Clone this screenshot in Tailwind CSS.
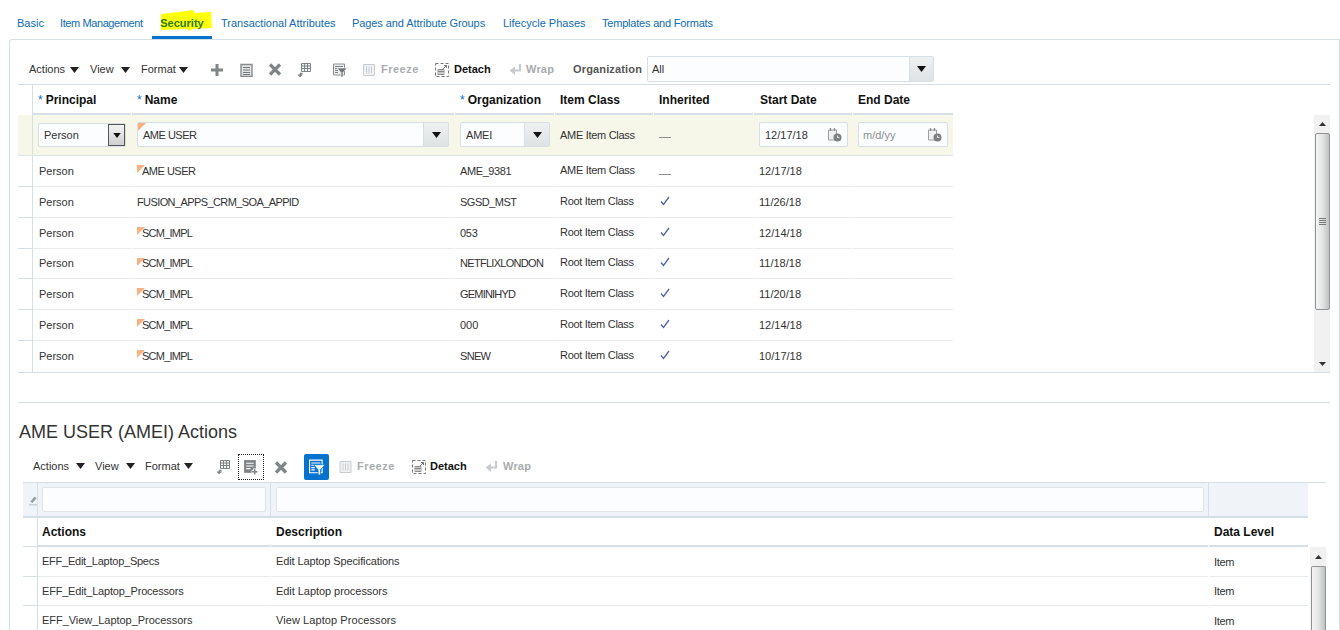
<!DOCTYPE html>
<html lang="en">
<head>
<meta charset="utf-8">
<script src="https://cdn.jsdelivr.net/npm/@tailwindcss/browser@4"></script>
<title>Security</title>
</head>
<body class="h-[630px] w-[1340px] overflow-hidden bg-white font-['Liberation_Sans',Arial,sans-serif] text-[11px] leading-none text-[#333]">

<!-- Tabs -->
<nav class="flex h-[39px] items-start text-[#0f6cb5]">
  <a class="ml-[17px] mt-[18px] w-[27px]">Basic</a>
  <a class="ml-[16px] mt-[18px] w-[83px] whitespace-nowrap tracking-[-0.4px]">Item Management</a>
  <a class="relative ml-[9px] flex h-[39px] w-[60px] justify-center border-b-[3px] border-[#0572ce]">
    <svg class="absolute left-[8px] top-[9px] h-[23px] w-[52px]" viewBox="0 0 52 23"><path d="M1 5C12 4 26 2 32 1l2 1 1 2 16-1 1 16-20 1-2 2-3-2L1 21z" fill="#ffff0a"/></svg>
    <span class="relative mt-[18px] font-bold text-[#2c7a10]">Security</span>
  </a>
  <a class="ml-[9px] mt-[18px] w-[115px] whitespace-nowrap">Transactional Attributes</a>
  <a class="ml-[16px] mt-[18px] w-[134px] whitespace-nowrap tracking-[-0.08px]">Pages and Attribute Groups</a>
  <a class="ml-[17px] mt-[18px] w-[83px] whitespace-nowrap">Lifecycle Phases</a>
  <a class="ml-[16px] mt-[18px] w-[111px] whitespace-nowrap tracking-[-0.2px]">Templates and Formats</a>
</nav>

<!-- Panel -->
<main class="ml-[9px] h-[591px] w-[1331px] rounded-tl-[3px] border-x border-t border-[#d6dfe6]">
  <div class="ml-[8px] w-[1312px] pt-[17px]">

    <!-- Toolbar 1 -->
    <div class="flex h-[28px] items-start border-b border-[#d6dfe6]">
      <div class="flex h-[25px] items-center whitespace-nowrap">
        <span class="ml-[11px] w-[37px]">Actions</span>
        <svg class="ml-[4px] h-[6px] w-[9px]" viewBox="0 0 9 6"><path d="M0 0h9L4.500 6z" fill="#222"/></svg>
        <span class="ml-[11px] w-[26px]">View</span>
        <svg class="ml-[5px] h-[6px] w-[9px]" viewBox="0 0 9 6"><path d="M0 0h9L4.500 6z" fill="#222"/></svg>
        <span class="ml-[11px] w-[34px]">Format</span>
        <svg class="ml-[4px] h-[6px] w-[9px]" viewBox="0 0 9 6"><path d="M0 0h9L4.500 6z" fill="#222"/></svg>
        <svg class="ml-[23px] h-[12px] w-[12px]" viewBox="0 0 12 12"><path d="M4.500 0h3v4.500H12v3H7.500V12h-3V7.500H0v-3h4.500z" fill="#808587"/></svg>
        <svg class="ml-[17px] h-[14px] w-[13px]" viewBox="0 0 13 14"><path d="M1 1.500h11v12H1z" fill="#e2e4e5" stroke="#888c8f" stroke-width="1.400"/><path d="M3 4.500h7M3 7h7M3 9.500h7M3 11.500h7" stroke="#74787b" stroke-width="1.200"/></svg>
        <svg class="ml-[15px] h-[13px] w-[14px]" viewBox="0 0 14 13"><path d="M2 1.500l10 10M12 1.500l-10 10" stroke="#808587" stroke-width="3.200"/></svg>
        <svg class="ml-[15px] h-[14px] w-[14px]" viewBox="0 0 14 14"><path d="M4.500.5h9v8h-9zM4.500 3h9M4.500 5.500h9M7.500.5v8M10.500.5v8" fill="#f4f5f5" stroke="#7f8386"/><path d="M5.500 10.500H3.500V12" fill="none" stroke="#7f8386" stroke-width="1.500"/><path d="M0.500 11.500h5.500L3 14.500z" fill="#7f8386"/></svg>
        <svg class="ml-[22px] h-[14px] w-[14px]" viewBox="0 0 14 14"><path d="M.5 1h11v11H.5z" fill="#eceded" stroke="#8a8e91"/><path d="M2 3.500h8M2 5.500h3M2 7.500h3M2 9.500h3" stroke="#7c8083"/><path d="M4 5h10l-4 4.500V14H8V9.500z" fill="#6f7376" stroke="#fff" stroke-width=".6"/></svg>
        <svg class="ml-[16px] h-[14px] w-[12px]" viewBox="0 0 12 14"><path d="M.5 1.500h11v11H.5z" fill="#f1f2f3" stroke="#c9cccf"/><path d="M3.500 3.500v7M6 3.500v7M8.500 3.500v7" stroke="#c9cccf"/></svg>
        <span class="ml-[6px] w-[38px] font-bold tracking-[0.5px] text-[#a9acae]">Freeze</span>
        <svg class="ml-[16px] h-[14px] w-[14px]" viewBox="0 0 14 14"><path d="M.5.5h13v13H.5z" fill="none" stroke="#777" stroke-dasharray="3 2"/><path d="M3 6.500h6v5H3zM3 8.500h6M5 6.500v5M7 6.500v5" fill="none" stroke="#777" stroke-width=".8"/><path d="M8 6l3.500-3.500M9 2.500h2.500V5" fill="none" stroke="#777"/></svg>
        <span class="ml-[5px] w-[37px] font-bold text-[#111]">Detach</span>
        <svg class="ml-[18px] h-[12px] w-[13px]" viewBox="0 0 13 12"><path d="M11 0v6.500H5" fill="none" stroke="#c9cccf" stroke-width="2.200"/><path d="M6 2.500L.5 6.500 6 11z" fill="#c9cccf"/></svg>
        <span class="ml-[4px] w-[28px] font-bold tracking-[0.2px] text-[#a9acae]">Wrap</span>
        <span class="ml-[19px] w-[69px] font-bold tracking-[0.15px] text-[#555]">Organization</span>
      </div>
      <div class="-mt-[1px] ml-[5px] flex h-[26px] w-[287px] rounded-[2px] border border-[#d6dfe6] bg-[#fcfdfe]">
        <span class="flex-1 pl-[4px] pt-[7px]">All</span>
        <span class="flex w-[24px] items-center justify-center border-l border-[#d6dfe6] bg-linear-to-b from-[#eef0f1] to-[#dfe3e5]"><svg class="h-[6px] w-[9px]" viewBox="0 0 9 6"><path d="M0 0h9L4.500 6z" fill="#111"/></svg></span>
      </div>
    </div>

    <!-- Table 1 -->
    <div class="border-b border-[#d6dfe6]">
      <!-- Header -->
      <div class="flex h-[30px] text-[12px] font-bold text-[#111]">
        <div class="w-[15px] border-r border-[#d6dfe6]"></div>
        <div class="mr-px flex w-[98px] items-center whitespace-nowrap border-b-2 border-[#d6dfe6] pl-[5px] pt-[2px]"><span class="mr-[3px] font-normal text-[#0572ce]">*</span>Principal</div>
        <div class="mr-px flex w-[322px] items-center whitespace-nowrap border-b-2 border-[#d6dfe6] pl-[5px] pt-[2px]"><span class="mr-[3px] font-normal text-[#0572ce]">*</span>Name</div>
        <div class="mr-px flex w-[99px] items-center whitespace-nowrap border-b-2 border-[#d6dfe6] pl-[5px] pt-[2px]"><span class="mr-[3px] font-normal text-[#0572ce]">*</span>Organization</div>
        <div class="mr-px flex w-[98px] items-center whitespace-nowrap border-b-2 border-[#d6dfe6] pl-[5px] pt-[2px]">Item Class</div>
        <div class="mr-px flex w-[99px] items-center whitespace-nowrap border-b-2 border-[#d6dfe6] pl-[5px] pt-[2px]">Inherited</div>
        <div class="mr-px flex w-[98px] items-center whitespace-nowrap border-b-2 border-[#d6dfe6] pl-[6px] pt-[2px]">Start Date</div>
        <div class="flex w-[100px] items-center whitespace-nowrap border-b-2 border-[#d6dfe6] pl-[5px] pt-[2px]">End Date</div>
      </div>

      <div class="flex">
        <div class="w-[1296px]">
          <!-- Edit row -->
          <div class="flex h-[41px] w-[935px] border-b border-[#dfe4e8] bg-[#f6f7e9]">
            <div class="w-[15px] border-r border-[#d6dfe6]"></div>
            <div class="w-[99px] pl-[5px] pt-[8px]">
              <div class="flex h-[24px] w-[88px] rounded-[2px] border border-[#d6dfe6] bg-[#fcfdfe]">
                <span class="flex-1 pl-[5px] pt-[6px]">Person</span>
                <span class="flex w-[17px] items-center justify-center border border-[#555] bg-linear-to-b from-[#f4f4f4] to-[#cfcfcf]"><svg class="h-[5px] w-[8px]" viewBox="0 0 9 6"><path d="M0 0h9L4.500 6z" fill="#111"/></svg></span>
              </div>
            </div>
            <div class="w-[323px] pl-[5px] pt-[7px]">
              <div class="relative flex h-[25px] w-[312px] rounded-[2px] border border-[#d6dfe6] bg-[#fcfdfe]">
                <svg class="absolute left-0 top-0 h-[8px] w-[8px]" viewBox="0 0 8 8"><path d="M0 0h8L0 8z" fill="#f8b183"/></svg>
                <span class="flex-1 pl-[5px] pt-[7px] tracking-[-0.5px]">AME USER</span>
                <span class="flex w-[25px] items-center justify-center border-l border-[#d6dfe6] bg-linear-to-b from-[#eef0f1] to-[#dfe3e5]"><svg class="h-[6px] w-[9px]" viewBox="0 0 9 6"><path d="M0 0h9L4.500 6z" fill="#111"/></svg></span>
              </div>
            </div>
            <div class="w-[100px] pl-[5px] pt-[7px]">
              <div class="flex h-[25px] w-[90px] rounded-[2px] border border-[#d6dfe6] bg-[#fcfdfe]">
                <span class="flex-1 pl-[5px] pt-[7px] tracking-[-0.2px]">AMEI</span>
                <span class="flex w-[25px] items-center justify-center border-l border-[#d6dfe6] bg-linear-to-b from-[#eef0f1] to-[#dfe3e5]"><svg class="h-[6px] w-[9px]" viewBox="0 0 9 6"><path d="M0 0h9L4.500 6z" fill="#111"/></svg></span>
              </div>
            </div>
            <div class="flex w-[99px] items-center pl-[5px] tracking-[-0.3px]">AME Item Class</div>
            <div class="flex w-[100px] items-center pl-[5px]"><span class="mt-[5px] h-px w-[12px] bg-[#8a8e91]"></span></div>
            <div class="w-[99px] pl-[5px] pt-[7px]">
              <div class="flex h-[25px] w-[89px] items-center justify-between rounded-[2px] border border-[#d6dfe6] bg-[#fcfdfe] pl-[5px] pr-[5px]">
                <span class="mt-[2px]">12/17/18</span>
                <svg class="h-[15px] w-[15px]" viewBox="0 0 15 15"><path d="M1.500 3h8v10h-8z" fill="#eef0f1" stroke="#9aa0a3"/><path d="M3.500 1v3M7.500 1v3" stroke="#8a8e91" stroke-width="1.300"/><circle cx="10.500" cy="10.500" r="4" fill="#7c8083"/><path d="M10.500 8.500v2h2" fill="none" stroke="#fff" stroke-width=".8"/></svg>
              </div>
            </div>
            <div class="w-[100px] pl-[5px] pt-[7px]">
              <div class="flex h-[25px] w-[90px] items-center justify-between rounded-[2px] border border-[#d6dfe6] bg-[#fcfdfe] pl-[4px] pr-[5px]">
                <span class="mt-[2px] text-[#8a8e91]">m/d/yy</span>
                <svg class="h-[15px] w-[15px]" viewBox="0 0 15 15"><path d="M1.500 3h8v10h-8z" fill="#eef0f1" stroke="#9aa0a3"/><path d="M3.500 1v3M7.500 1v3" stroke="#8a8e91" stroke-width="1.300"/><circle cx="10.500" cy="10.500" r="4" fill="#7c8083"/><path d="M10.500 8.500v2h2" fill="none" stroke="#fff" stroke-width=".8"/></svg>
              </div>
            </div>
          </div>

          <!-- Rows -->
          <div class="flex h-[31px]">
            <div class="w-[15px] border-b border-r border-[#d6dfe6]"></div>
            <div class="mr-px flex w-[98px] items-center border-b border-[#e8ebee] pl-[6px]">Person</div>
            <div class="relative mr-px flex w-[322px] items-center border-b border-[#e8ebee] pl-[10px]"><svg class="absolute left-[5px] top-[9px] h-[8px] w-[8px]" viewBox="0 0 8 8"><path d="M0 0h8L0 8z" fill="#f8b183"/></svg><span class="relative tracking-[-0.5px]">AME USER</span></div>
            <div class="mr-px flex w-[99px] items-center border-b border-[#e8ebee] pl-[5px] tracking-[-0.4px]">AME_9381</div>
            <div class="mr-px flex w-[98px] items-center border-b border-[#e8ebee] pb-[2px] pl-[5px] tracking-[-0.3px]">AME Item Class</div>
            <div class="mr-px flex w-[99px] items-center border-b border-[#e8ebee] pl-[5px]"><span class="mt-[6px] h-px w-[12px] bg-[#8a8e91]"></span></div>
            <div class="mr-px flex w-[98px] items-center border-b border-[#e8ebee] pl-[5px]">12/17/18</div>
            <div class="w-[100px] border-b border-[#e8ebee]"></div>
          </div>
          <div class="flex h-[31px]">
            <div class="w-[15px] border-b border-r border-[#d6dfe6]"></div>
            <div class="mr-px flex w-[98px] items-center border-b border-[#e8ebee] pl-[6px]">Person</div>
            <div class="mr-px flex w-[322px] items-center border-b border-[#e8ebee] pl-[5px] tracking-[-0.6px]">FUSION_APPS_CRM_SOA_APPID</div>
            <div class="mr-px flex w-[99px] items-center border-b border-[#e8ebee] pl-[5px] tracking-[-0.5px]">SGSD_MST</div>
            <div class="mr-px flex w-[98px] items-center border-b border-[#e8ebee] pb-[2px] pl-[5px] tracking-[-0.3px]">Root Item Class</div>
            <div class="mr-px flex w-[99px] items-center border-b border-[#e8ebee] pb-[3px] pl-[6px]"><svg class="h-[10px] w-[10px]" viewBox="0 0 10 10"><path d="M1 5.500L3.500 8.500 9 1" fill="none" stroke="#5560a0" stroke-width="1.300"/></svg></div>
            <div class="mr-px flex w-[98px] items-center border-b border-[#e8ebee] pl-[5px]">11/26/18</div>
            <div class="w-[100px] border-b border-[#e8ebee]"></div>
          </div>
          <div class="flex h-[31px]">
            <div class="w-[15px] border-b border-r border-[#d6dfe6]"></div>
            <div class="mr-px flex w-[98px] items-center border-b border-[#e8ebee] pl-[6px]">Person</div>
            <div class="relative mr-px flex w-[322px] items-center border-b border-[#e8ebee] pl-[10px]"><svg class="absolute left-[5px] top-[9px] h-[8px] w-[8px]" viewBox="0 0 8 8"><path d="M0 0h8L0 8z" fill="#f8b183"/></svg><span class="relative tracking-[-0.75px]">SCM_IMPL</span></div>
            <div class="mr-px flex w-[99px] items-center border-b border-[#e8ebee] pl-[5px] tracking-[-0.3px]">053</div>
            <div class="mr-px flex w-[98px] items-center border-b border-[#e8ebee] pb-[2px] pl-[5px] tracking-[-0.3px]">Root Item Class</div>
            <div class="mr-px flex w-[99px] items-center border-b border-[#e8ebee] pb-[3px] pl-[6px]"><svg class="h-[10px] w-[10px]" viewBox="0 0 10 10"><path d="M1 5.500L3.500 8.500 9 1" fill="none" stroke="#5560a0" stroke-width="1.300"/></svg></div>
            <div class="mr-px flex w-[98px] items-center border-b border-[#e8ebee] pl-[5px]">12/14/18</div>
            <div class="w-[100px] border-b border-[#e8ebee]"></div>
          </div>
          <div class="flex h-[30px]">
            <div class="w-[15px] border-b border-r border-[#d6dfe6]"></div>
            <div class="mr-px flex w-[98px] items-center border-b border-[#e8ebee] pl-[6px]">Person</div>
            <div class="relative mr-px flex w-[322px] items-center border-b border-[#e8ebee] pl-[10px]"><svg class="absolute left-[5px] top-[9px] h-[8px] w-[8px]" viewBox="0 0 8 8"><path d="M0 0h8L0 8z" fill="#f8b183"/></svg><span class="relative tracking-[-0.75px]">SCM_IMPL</span></div>
            <div class="mr-px flex w-[99px] items-center border-b border-[#e8ebee] pl-[5px] tracking-[-0.7px]">NETFLIXLONDON</div>
            <div class="mr-px flex w-[98px] items-center border-b border-[#e8ebee] pb-[2px] pl-[5px] tracking-[-0.3px]">Root Item Class</div>
            <div class="mr-px flex w-[99px] items-center border-b border-[#e8ebee] pb-[3px] pl-[6px]"><svg class="h-[10px] w-[10px]" viewBox="0 0 10 10"><path d="M1 5.500L3.500 8.500 9 1" fill="none" stroke="#5560a0" stroke-width="1.300"/></svg></div>
            <div class="mr-px flex w-[98px] items-center border-b border-[#e8ebee] pl-[5px]">11/18/18</div>
            <div class="w-[100px] border-b border-[#e8ebee]"></div>
          </div>
          <div class="flex h-[31px]">
            <div class="w-[15px] border-b border-r border-[#d6dfe6]"></div>
            <div class="mr-px flex w-[98px] items-center border-b border-[#e8ebee] pl-[6px]">Person</div>
            <div class="relative mr-px flex w-[322px] items-center border-b border-[#e8ebee] pl-[10px]"><svg class="absolute left-[5px] top-[9px] h-[8px] w-[8px]" viewBox="0 0 8 8"><path d="M0 0h8L0 8z" fill="#f8b183"/></svg><span class="relative tracking-[-0.75px]">SCM_IMPL</span></div>
            <div class="mr-px flex w-[99px] items-center border-b border-[#e8ebee] pl-[5px] tracking-[-0.8px]">GEMINIHYD</div>
            <div class="mr-px flex w-[98px] items-center border-b border-[#e8ebee] pb-[2px] pl-[5px] tracking-[-0.3px]">Root Item Class</div>
            <div class="mr-px flex w-[99px] items-center border-b border-[#e8ebee] pb-[3px] pl-[6px]"><svg class="h-[10px] w-[10px]" viewBox="0 0 10 10"><path d="M1 5.500L3.500 8.500 9 1" fill="none" stroke="#5560a0" stroke-width="1.300"/></svg></div>
            <div class="mr-px flex w-[98px] items-center border-b border-[#e8ebee] pl-[5px]">11/20/18</div>
            <div class="w-[100px] border-b border-[#e8ebee]"></div>
          </div>
          <div class="flex h-[31px]">
            <div class="w-[15px] border-b border-r border-[#d6dfe6]"></div>
            <div class="mr-px flex w-[98px] items-center border-b border-[#e8ebee] pl-[6px]">Person</div>
            <div class="relative mr-px flex w-[322px] items-center border-b border-[#e8ebee] pl-[10px]"><svg class="absolute left-[5px] top-[9px] h-[8px] w-[8px]" viewBox="0 0 8 8"><path d="M0 0h8L0 8z" fill="#f8b183"/></svg><span class="relative tracking-[-0.75px]">SCM_IMPL</span></div>
            <div class="mr-px flex w-[99px] items-center border-b border-[#e8ebee] pl-[5px]">000</div>
            <div class="mr-px flex w-[98px] items-center border-b border-[#e8ebee] pb-[2px] pl-[5px] tracking-[-0.3px]">Root Item Class</div>
            <div class="mr-px flex w-[99px] items-center border-b border-[#e8ebee] pb-[3px] pl-[6px]"><svg class="h-[10px] w-[10px]" viewBox="0 0 10 10"><path d="M1 5.500L3.500 8.500 9 1" fill="none" stroke="#5560a0" stroke-width="1.300"/></svg></div>
            <div class="mr-px flex w-[98px] items-center border-b border-[#e8ebee] pl-[5px]">12/14/18</div>
            <div class="w-[100px] border-b border-[#e8ebee]"></div>
          </div>
          <div class="flex h-[31px]">
            <div class="w-[15px] border-r border-[#d6dfe6]"></div>
            <div class="mr-px flex w-[98px] items-center pl-[6px]">Person</div>
            <div class="relative mr-px flex w-[322px] items-center pl-[10px]"><svg class="absolute left-[5px] top-[9px] h-[8px] w-[8px]" viewBox="0 0 8 8"><path d="M0 0h8L0 8z" fill="#f8b183"/></svg><span class="relative tracking-[-0.75px]">SCM_IMPL</span></div>
            <div class="mr-px flex w-[99px] items-center pl-[5px] tracking-[-0.7px]">SNEW</div>
            <div class="mr-px flex w-[98px] items-center pb-[2px] pl-[5px] tracking-[-0.3px]">Root Item Class</div>
            <div class="mr-px flex w-[99px] items-center pb-[3px] pl-[6px]"><svg class="h-[10px] w-[10px]" viewBox="0 0 10 10"><path d="M1 5.500L3.500 8.500 9 1" fill="none" stroke="#5560a0" stroke-width="1.300"/></svg></div>
            <div class="mr-px flex w-[98px] items-center pl-[5px]">10/17/18</div>
          </div>
        </div>

        <!-- Scrollbar 1 -->
        <div class="flex w-[16px] flex-col bg-[#f1f1f1]">
          <div class="flex h-[18px] items-center justify-center"><svg class="h-[4px] w-[7px]" viewBox="0 0 7 4"><path d="M3.500 0L7 4H0z" fill="#333"/></svg></div>
          <div class="ml-px flex h-[177px] w-[15px] flex-col items-center justify-center gap-px rounded-[2px] border border-[#8f9396] bg-linear-to-r from-[#f4f4f4] via-[#e4e4e4] to-[#bfc1c3]">
            <span class="h-px w-[7px] bg-[#777]"></span><span class="h-px w-[7px] bg-[#777]"></span><span class="h-px w-[7px] bg-[#777]"></span><span class="h-px w-[7px] bg-[#777]"></span>
          </div>
          <div class="flex flex-1 items-end justify-center pb-[6px]"><svg class="h-[4px] w-[7px]" viewBox="0 0 7 4"><path d="M0 0h7L3.500 4z" fill="#333"/></svg></div>
        </div>
      </div>
    </div>

    <!-- Separator -->
    <div class="mt-[29px] h-px bg-[#d6dfe6]"></div>

    <!-- Section title -->
    <h2 class="ml-px mt-[17px] h-[24px] whitespace-nowrap text-[18px] leading-[24px] text-[#333]">AME USER (AMEI) Actions</h2>

    <!-- Toolbar 2 -->
    <div class="mt-[10px] flex h-[26px] items-center whitespace-nowrap">
      <span class="-mt-[2px] ml-[15px] w-[37px]">Actions</span>
      <svg class="-mt-[2px] ml-[6px] h-[6px] w-[9px]" viewBox="0 0 9 6"><path d="M0 0h9L4.500 6z" fill="#222"/></svg>
      <span class="-mt-[2px] ml-[10px] w-[26px]">View</span>
      <svg class="-mt-[2px] ml-[5px] h-[6px] w-[9px]" viewBox="0 0 9 6"><path d="M0 0h9L4.500 6z" fill="#222"/></svg>
      <span class="-mt-[2px] ml-[10px] w-[34px]">Format</span>
      <svg class="-mt-[2px] ml-[5px] h-[6px] w-[9px]" viewBox="0 0 9 6"><path d="M0 0h9L4.500 6z" fill="#222"/></svg>
      <svg class="ml-[23px] h-[14px] w-[14px]" viewBox="0 0 14 14"><path d="M4.500.5h9v8h-9zM4.500 3h9M4.500 5.500h9M7.500.5v8M10.500.5v8" fill="#f4f5f5" stroke="#7f8386"/><path d="M5.500 10.500H3.500V12" fill="none" stroke="#7f8386" stroke-width="1.500"/><path d="M.5 11.500h5.500L3 14.500z" fill="#7f8386"/></svg>
      <span class="ml-[8px] flex h-[26px] w-[26px] items-center justify-center border border-dotted border-[#222]">
        <svg class="h-[16px] w-[16px]" viewBox="0 0 15 15"><path d="M1 1h11v12H1z" fill="#7f8386"/><path d="M3 4h7M3 6.500h7M3 9h4" stroke="#fff"/><path d="M11 9v6M8 12h6" stroke="#fff" stroke-width="3"/><path d="M11 9.500v5M8.500 12h5" stroke="#7f8386" stroke-width="1.400"/></svg>
      </span>
      <svg class="ml-[10px] h-[13px] w-[14px]" viewBox="0 0 14 13"><path d="M2 1.500l10 10M12 1.500l-10 10" stroke="#808587" stroke-width="3.200"/></svg>
      <span class="ml-[16px] flex h-[26px] w-[25px] items-center justify-center rounded-[2px] bg-[#0572ce]">
        <svg class="h-[16px] w-[16px]" viewBox="0 0 14 14"><path d="M.5 1h11v11H.5z" fill="none" stroke="#fff"/><path d="M2 3.500h8M2 5.500h3M2 7.500h3M2 9.500h3" stroke="#fff"/><path d="M4 5h10l-4 4.500V14H8V9.500z" fill="#fff" stroke="#0572ce" stroke-width=".6"/></svg>
      </span>
      <svg class="ml-[10px] h-[14px] w-[13px]" viewBox="0 0 12 14"><path d="M.5 1.500h11v11H.5z" fill="#f1f2f3" stroke="#c9cccf"/><path d="M3.500 3.500v7M6 3.500v7M8.500 3.500v7" stroke="#c9cccf"/></svg>
      <span class="-mt-[2px] ml-[5px] w-[38px] font-bold tracking-[0.5px] text-[#a9acae]">Freeze</span>
      <svg class="ml-[17px] h-[14px] w-[14px]" viewBox="0 0 14 14"><path d="M.5.5h13v13H.5z" fill="none" stroke="#777" stroke-dasharray="3 2"/><path d="M3 6.500h6v5H3zM3 8.500h6M5 6.500v5M7 6.500v5" fill="none" stroke="#777" stroke-width=".8"/><path d="M8 6l3.500-3.500M9 2.500h2.500V5" fill="none" stroke="#777"/></svg>
      <span class="-mt-[2px] ml-[4px] w-[37px] font-bold text-[#111]">Detach</span>
      <svg class="ml-[18px] h-[12px] w-[13px]" viewBox="0 0 13 12"><path d="M11 0v6.500H5" fill="none" stroke="#c9cccf" stroke-width="2.200"/><path d="M6 2.500L.5 6.500 6 11z" fill="#c9cccf"/></svg>
      <span class="-mt-[2px] ml-[5px] w-[28px] font-bold tracking-[0.2px] text-[#a9acae]">Wrap</span>
    </div>

    <!-- Table 2 -->
    <div class="ml-[5px] mt-[2px] w-[1303px] border-t border-[#d6dfe6]">
      <!-- Filter row -->
      <div class="flex h-[35px] w-[1285px] border-b-2 border-[#d6dfe6] bg-[#f0f3f7]">
        <div class="flex w-[15px] items-center border-r border-[#d6dfe6] pl-[6px]"><svg class="h-[12px] w-[9px]" viewBox="0 0 9 12"><path d="M1.500 8L6 2l2.500 2-4.500 5.500z" fill="#9a9ea1"/><path d="M0 11.500h9" stroke="#b5b9bc"/></svg></div>
        <div class="flex w-[233px] items-center border-r border-[#d6dfe6] pl-[4px]"><div class="h-[25px] w-[224px] rounded-[2px] border border-[#dfe4e8] bg-[#fcfdfe]"></div></div>
        <div class="flex w-[938px] items-center border-r border-[#d6dfe6] pl-[5px]"><div class="h-[25px] w-[928px] rounded-[2px] border border-[#dfe4e8] bg-[#fcfdfe]"></div></div>
        <div class="flex-1"></div>
      </div>
      <!-- Header -->
      <div class="flex h-[29px] w-[1285px] text-[12px] font-bold text-[#111]">
        <div class="w-[15px] border-b border-r border-[#d6dfe6]"></div>
        <div class="mr-px flex w-[232px] items-center border-b-2 border-[#d6dfe6] pl-[4px]">Actions</div>
        <div class="mr-px flex w-[937px] items-center border-b-2 border-[#d6dfe6] pl-[5px]">Description</div>
        <div class="flex flex-1 items-center border-b-2 border-[#d6dfe6] pl-[5px]">Data Level</div>
      </div>
      <!-- Rows + scrollbar -->
      <div class="flex items-start">
        <div class="w-[1285px]">
          <div class="flex h-[30px]">
            <div class="w-[15px] border-b border-r border-[#d6dfe6]"></div>
            <div class="mr-px flex w-[232px] items-center border-b border-[#e8ebee] pl-[4px] tracking-[-0.24px]">EFF_Edit_Laptop_Specs</div>
            <div class="mr-px flex w-[937px] items-center border-b border-[#e8ebee] pl-[5px] tracking-[-0.12px]">Edit Laptop Specifications</div>
            <div class="flex flex-1 items-center border-b border-[#e8ebee] pl-[5px] pt-[2px] tracking-[-0.3px]">Item</div>
          </div>
          <div class="flex h-[29px]">
            <div class="w-[15px] border-b border-r border-[#d6dfe6]"></div>
            <div class="mr-px flex w-[232px] items-center border-b border-[#e8ebee] pl-[4px] tracking-[-0.2px]">EFF_Edit_Laptop_Processors</div>
            <div class="mr-px flex w-[937px] items-center border-b border-[#e8ebee] pl-[5px] tracking-[-0.05px]">Edit Laptop processors</div>
            <div class="flex flex-1 items-center border-b border-[#e8ebee] pl-[5px] tracking-[-0.3px]">Item</div>
          </div>
          <div class="flex h-[29px]">
            <div class="w-[15px] border-r border-[#d6dfe6]"></div>
            <div class="mr-px flex w-[232px] items-center pl-[4px] tracking-[-0.04px]">EFF_View_Laptop_Processors</div>
            <div class="mr-px flex w-[937px] items-center pl-[5px] tracking-[0.08px]">View Laptop Processors</div>
            <div class="flex flex-1 items-center pl-[5px] pt-[2px] tracking-[-0.3px]">Item</div>
          </div>
        </div>
        <div class="ml-[2px] flex h-[88px] w-[16px] flex-col bg-[#f1f1f1]">
          <div class="flex h-[19px] items-center justify-center"><svg class="h-[4px] w-[7px]" viewBox="0 0 7 4"><path d="M3.500 0L7 4H0z" fill="#333"/></svg></div>
          <div class="ml-px flex w-[15px] flex-1 flex-col items-center justify-end gap-px rounded-t-[2px] border border-b-0 border-[#8f9396] bg-linear-to-r from-[#f4f4f4] via-[#e4e4e4] to-[#bfc1c3] pb-[2px]">
            <span class="h-px w-[7px] bg-[#777]"></span><span class="h-px w-[7px] bg-[#777]"></span>
          </div>
        </div>
      </div>
    </div>
  </div>
</main>
</body>
</html>
